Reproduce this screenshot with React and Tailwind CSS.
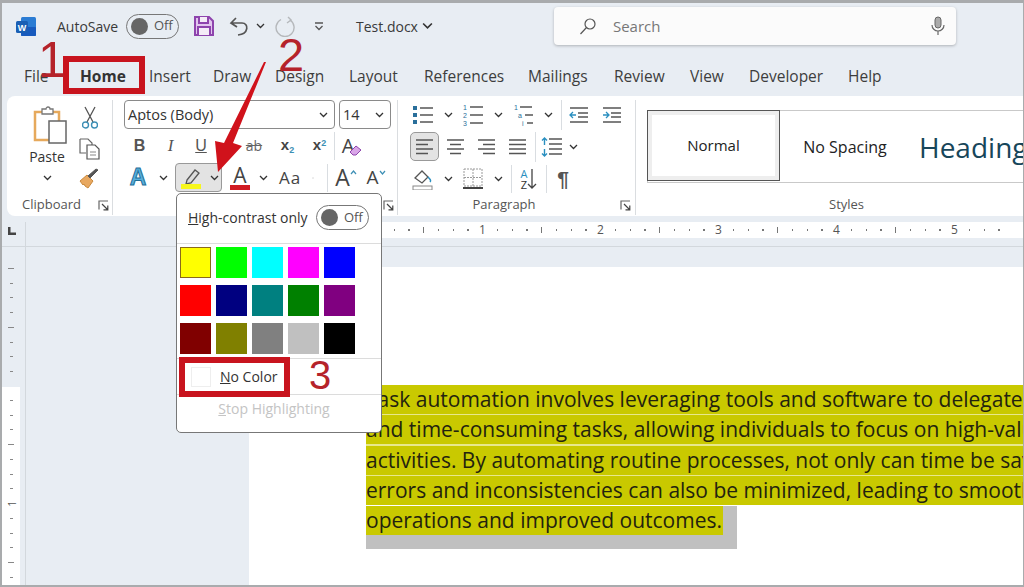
import React from "react";

const Chev = ({ c = "" }) => (
  <svg width="9" height="6" viewBox="0 0 9 6" className={c}><path d="M1 1l3.5 3.5L8 1" fill="none" stroke="#333" strokeWidth="1.3" /></svg>
);
const Launcher = () => (
  <svg width="11" height="11" viewBox="0 0 11 11"><path d="M1 9.5V1h9" fill="none" stroke="#666" strokeWidth="1.2" /><path d="M4 4l5.5 5.5M9.8 5.5v4.3H5.5" fill="none" stroke="#444" strokeWidth="1.2" /></svg>
);
const Sep = ({ h = "h-[30px]" }) => <div className={`w-px ${h} bg-[#d9dde1] shrink-0`} />;
const Cell = ({ w, children, c = "" }) => <div className={`${w} h-full flex items-center justify-center shrink-0 ${c}`}>{children}</div>;

const Lines = ({ kind = "list" }) => {
  const p = {
    left: "M2 3h17M2 7.5h12M2 12h17M2 16.5h12",
    center: "M2 3h17M5 7.5h11M2 12h17M5 16.5h11",
    right: "M2 3h17M7 7.5h12M2 12h17M7 16.5h12",
    just: "M2 3h17M2 7.5h17M2 12h17M2 16.5h17",
  }[kind];
  return <svg width="21" height="20" viewBox="0 0 21 20"><path d={p} stroke="#555" strokeWidth="1.5" fill="none" /></svg>;
};

const tabs = [
  ["File", "w-[56px]"],
  ["Home", "w-[69px]"],
  ["Insert", "w-[64px]"],
  ["Draw", "w-[62px]"],
  ["Design", "w-[74px]"],
  ["Layout", "w-[75px]"],
  ["References", "w-[104px]"],
  ["Mailings", "w-[86px]"],
  ["Review", "w-[76px]"],
  ["View", "w-[59px]"],
  ["Developer", "w-[99px]"],
  ["Help", "w-[50px]"],
];

const swatches = [
  ["bg-[#ffff00]", "bg-[#00ff00]", "bg-[#00ffff]", "bg-[#ff00ff]", "bg-[#0000ff]"],
  ["bg-[#ff0000]", "bg-[#000080]", "bg-[#008080]", "bg-[#008000]", "bg-[#800080]"],
  ["bg-[#800000]", "bg-[#808000]", "bg-[#808080]", "bg-[#c0c0c0]", "bg-[#000000]"],
];

const Toggle = () => (
  <div className="w-[53px] h-[25px] rounded-full border border-[#777] bg-white flex items-center pl-[4px] gap-[6px]">
    <div className="w-[17px] h-[17px] rounded-full bg-[#666]" />
    <span className="text-[13px] text-[#555]">Off</span>
  </div>
);

function HRuler() {
  const items = [];
  for (let i = 0; i < 44; i++) {
    const n = i % 8 === 0 && i > 0 ? i / 8 : null;
    items.push(
      <div key={i} className="w-[14.75px] h-full shrink-0 flex items-center justify-start relative">
        {n ? (
          <span className="-ml-[3px] text-[12px] leading-none text-[#555]">{n}</span>
        ) : i % 4 === 0 ? (
          <div className="w-px h-[6px] bg-[#777]" />
        ) : (
          <div className="w-[1.5px] h-[1.5px] bg-[#777]" />
        )}
      </div>
    );
  }
  return <div className="flex h-full">{items}</div>;
}

function VRuler({ start, count }) {
  const items = [];
  for (let i = 0; i < count; i++) {
    const k = start + i;
    items.push(
      <div key={i} className="h-[14.75px] w-full shrink-0 flex items-center justify-center">
        {k === 8 ? (
          <span className="text-[11px] leading-none text-[#555] -rotate-90">1</span>
        ) : k % 4 === 0 ? (
          <div className="w-[6px] h-px bg-[#888]" />
        ) : (
          <div className="w-[3px] h-px bg-[#888]" />
        )}
      </div>
    );
  }
  return <div className="flex flex-col">{items}</div>;
}

const docLines = [
  "Task automation involves leveraging tools and software to delegate repetitive",
  "and time-consuming tasks, allowing individuals to focus on high-value",
  "activities. By automating routine processes, not only can time be saved, but",
  "errors and inconsistencies can also be minimized, leading to smoother",
];

export default function App() {
  return (
    <div className="relative w-[1024px] h-[587px] overflow-hidden bg-[#e8edf3] border-t-[3px] border-l-[2px] border-r-[1px] border-b-[2px] border-[#a9abad] font-['Open_Sans','Noto_Sans',sans-serif] text-[#333]">
      {/* title bar */}
      <div className="h-[46px] flex items-center">
        <div className="w-[14px] shrink-0" />
        <svg width="21" height="21" viewBox="0 0 21 21" className="shrink-0">
          <rect x="5" y="1" width="15" height="19" rx="1.5" fill="#2b7cd3" />
          <rect x="5" y="11" width="15" height="9" rx="1" fill="#185abd" />
          <rect x="0" y="5" width="12" height="12" rx="1.5" fill="#1a5fb4" />
          <text x="6" y="14.5" textAnchor="middle" fontSize="9" fontWeight="700" fill="#fff" fontFamily="Liberation Sans">W</text>
        </svg>
        <span className="ml-[20px] text-[14px] text-[#3a3a3a] w-[66px]">AutoSave</span>
        <div className="ml-[3px] w-[53px] h-[25px] rounded-full border border-[#777] flex items-center pl-[4px] gap-[6px]">
          <div className="w-[17px] h-[17px] rounded-full bg-[#666]" />
          <span className="text-[13px] text-[#555]">Off</span>
        </div>
        <svg width="22" height="22" viewBox="0 0 22 22" className="ml-[14px]">
          <path d="M2 2h14l4 4v14H2z" fill="#e2c6ee" stroke="#8e44ad" strokeWidth="2" />
          <path d="M6 2v6h9V2M5 20v-8h12v8" fill="#f4ecf7" stroke="#8e44ad" strokeWidth="2" />
        </svg>
        <svg width="22" height="20" viewBox="0 0 22 20" className="ml-[14px]">
          <path d="M7 2L2 7l6 4M2.5 7H13c7 0 7 11-4 12" fill="none" stroke="#555" strokeWidth="1.7" />
        </svg>
        <Chev c="ml-[5px]" />
        <svg width="22" height="22" viewBox="0 0 22 22" className="ml-[10px]">
          <path d="M13 2l3 3-4 3M6 4.5a9 9 0 1 0 9 .5" fill="none" stroke="#b5b8bb" strokeWidth="1.4" />
        </svg>
        <svg width="10" height="9" viewBox="0 0 10 9" className="ml-[17px]"><path d="M1 1h8M1.5 4l3.5 3.5L8.5 4" fill="none" stroke="#555" strokeWidth="1.3" /></svg>
        <span className="ml-[32px] text-[14px] text-[#3a3a3a]">Test.docx</span>
        <Chev c="ml-[5px] scale-125" />
        <div className="ml-[122px] w-[402px] h-[38px] bg-[#fbfbfb] rounded-[4px] shadow-[0_1px_3px_rgba(0,0,0,0.25)] flex items-center pl-[25px] pr-[10px]">
          <svg width="18" height="18" viewBox="0 0 18 18"><circle cx="11" cy="7" r="5" fill="none" stroke="#555" strokeWidth="1.2" /><path d="M7.5 10.5L1.5 17" stroke="#555" strokeWidth="1.2" /></svg>
          <span className="ml-[16px] text-[15px] text-[#777]">Search</span>
          <svg width="16" height="20" viewBox="0 0 16 20" className="ml-auto"><rect x="5" y="1" width="6" height="11" rx="3" fill="#aaa" stroke="#666" /><path d="M2 9a6 6 0 0 0 12 0M8 15v4" fill="none" stroke="#666" strokeWidth="1.2" /></svg>
        </div>
      </div>

      {/* tabs */}
      <div className="h-[47px] flex items-center pt-[8px] pl-[22px] text-[15.5px] text-[#3d3d3d]">
        {tabs.map(([t, w]) => (
          <span key={t} className={`${w} shrink-0 ${t === "Home" ? "font-bold text-[#333]" : ""}`}>{t}</span>
        ))}
      </div>

      {/* ribbon */}
      <div className="ml-[5px] h-[120px] bg-white rounded-l-[8px] flex pt-[4px] text-[#333]">
        {/* clipboard */}
        <div className="w-[106px] shrink-0 border-r border-[#dadde0] flex flex-col mb-[1px]">
          <div className="flex-1 flex">
            <div className="w-[72px] flex flex-col items-center pl-[8px] pt-[6px]">
              <svg width="36" height="38" viewBox="0 0 36 38" className="ml-[5px]">
                <path d="M3 6h24v28H3z" fill="#fff" stroke="#e6a95c" strokeWidth="2.5" />
                <path d="M10 6V3h4a2 2 0 0 1 4 0h3v5H10z" fill="#fff" stroke="#777" strokeWidth="1.3" />
                <rect x="17" y="15" width="17" height="22" fill="#fff" stroke="#666" strokeWidth="1.5" />
              </svg>
              <span className="text-[14px] mt-[2px]">Paste</span>
              <Chev c="mt-[8px]" />
            </div>
            <div className="flex flex-col items-center pt-[6px] gap-[8px]">
              <svg width="16" height="24" viewBox="0 0 16 24"><path d="M3 1l8 15M13 1L5 16" stroke="#555" strokeWidth="1.3" /><circle cx="3.5" cy="19" r="3" fill="none" stroke="#3d8fb5" strokeWidth="1.4" /><circle cx="12.5" cy="19" r="3" fill="none" stroke="#3d8fb5" strokeWidth="1.4" /></svg>
              <svg width="21" height="22" viewBox="0 0 21 22"><path d="M1 1h8l4 4v2M1 1v14h6" fill="#fff" stroke="#666" strokeWidth="1.2" /><path d="M8 7h8l4 4v10H8z" fill="#fff" stroke="#555" strokeWidth="1.2" /><path d="M11 14h6M11 17h6" stroke="#888" /></svg>
              <svg width="21" height="21" viewBox="0 0 21 21"><path d="M1 13l7-6 6 6-5 7-3-2-1-2-1 1z" fill="#e8a860" stroke="#c98a3e" /><path d="M9 8l2 2 8-8-2-1z" fill="#555" stroke="#555" /></svg>
            </div>
          </div>
          <div className="h-[20px] flex items-center pl-[15px] pr-[3px] justify-between">
            <span className="text-[13px] text-[#555]">Clipboard</span>
            <Launcher />
          </div>
        </div>

        {/* font */}
        <div className="w-[285px] shrink-0 border-r border-[#dadde0] flex flex-col pl-[11px] mb-[1px]">
          <div className="flex gap-[4px] h-[29px]">
            <div className="w-[211px] h-[29px] border border-[#8a8a8a] rounded-[4px] flex items-center justify-between pl-[3px] pr-[6px] text-[14.5px]">
              <span>Aptos (Body)</span><Chev />
            </div>
            <div className="w-[52px] h-[29px] border border-[#8a8a8a] rounded-[4px] flex items-center justify-between pl-[3px] pr-[6px] text-[14.5px]">
              <span>14</span><Chev />
            </div>
          </div>
          <div className="flex items-center h-[33px] text-[15px]">
            <Cell w="w-[31px]"><b className="font-['Liberation_Sans'] text-[16px] text-[#555]">B</b></Cell>
            <Cell w="w-[31px]"><i className="font-['Liberation_Serif'] text-[17px] text-[#555]">I</i></Cell>
            <Cell w="w-[30px]"><u className="font-['Liberation_Sans'] text-[16px] text-[#555]">U</u></Cell>
            <Cell w="w-[22px]"><Chev /></Cell>
            <Cell w="w-[32px]"><s className="text-[14px] text-[#666]">ab</s></Cell>
            <Cell w="w-[35px]"><b className="font-['Liberation_Sans'] text-[15px] text-[#444]">x<sub className="text-[#3d8fb5] text-[9px]">2</sub></b></Cell>
            <Cell w="w-[29px]"><b className="font-['Liberation_Sans'] text-[15px] text-[#444]">x<sup className="text-[#3d8fb5] text-[9px]">2</sup></b></Cell>
            <Sep h="h-[28px]" />
            <Cell w="w-[34px]" c="relative">
              <span className="text-[20px] text-[#444]">A</span>
              <svg width="13" height="11" viewBox="0 0 13 11" className="-ml-[5px] mt-[9px]"><path d="M1 7l6-6 5 4-5 5H4z" fill="#d9a6e8" stroke="#8e44ad" /></svg>
            </Cell>
          </div>
          <div className="flex items-center h-[29px] mt-[1px]">
            <Cell w="w-[28px]">
              <span className="text-[23px] font-bold leading-none text-[#5ab0dc] [-webkit-text-stroke:1px_#1f6f99] font-['Liberation_Sans']">A</span>
            </Cell>
            <Cell w="w-[23px]"><Chev /></Cell>
            <div className="w-[47px] h-[29px] bg-[#e3e3e3] border border-[#999] rounded-[4px] flex items-center pl-[4px] gap-[8px] shrink-0">
              <svg width="22" height="22" viewBox="0 0 22 22">
                <path d="M7 13L15 3l4 3-8 10-5 1z" fill="#dcdcdc" stroke="#555" strokeWidth="1.3" />
                <rect x="1" y="17" width="20" height="5" fill="#f7f71c" />
              </svg>
              <Chev />
            </div>
            <Cell w="w-[36px]">
              <div className="flex flex-col items-center w-[20px]">
                <span className="text-[21px] leading-[20px] text-[#444]">A</span>
                <div className="w-[20px] h-[5px] bg-[#d01c24]" />
              </div>
            </Cell>
            <Cell w="w-[10px]"><Chev /></Cell>
            <Cell w="w-[44px]"><span className="text-[17px] tracking-wider text-[#444]">Aa</span></Cell>
            <Cell w="w-[2px]"><Chev /></Cell>
            <div className="w-[13px]" />
            <Sep h="h-[28px]" />
            <Cell w="w-[36px]"><span className="text-[23px] text-[#444]">A</span><svg width="7" height="5" viewBox="0 0 7 5" className="mb-[10px]"><path d="M1 4l2.5-3L6 4" fill="none" stroke="#3d8fb5" strokeWidth="1.2" /></svg></Cell>
            <Cell w="w-[24px]"><span className="text-[19px] text-[#444]">A</span><svg width="7" height="5" viewBox="0 0 7 5" className="mb-[10px]"><path d="M1 1l2.5 3L6 1" fill="none" stroke="#3d8fb5" strokeWidth="1.2" /></svg></Cell>
          </div>
          <div className="flex-1" />
          <div className="h-[20px] flex items-center justify-end pr-[3px] gap-[70px]">
            <span className="text-[13px] text-[#555]">Font</span>
            <Launcher />
          </div>
        </div>

        {/* paragraph */}
        <div className="w-[238px] shrink-0 border-r border-[#dadde0] flex flex-col pl-[10px] mb-[1px]">
          <div className="flex items-center h-[29px]">
            <Cell w="w-[28px]" c="ml-[1px]">
              <svg width="22" height="22" viewBox="0 0 22 22"><path d="M8 4h13M8 11h13M8 18h13" stroke="#555" strokeWidth="1.5" /><path d="M1 2h4v4H1zM1 9h4v4H1zM1 16h4v4H1z" fill="#2a6f9b" /></svg>
            </Cell>
            <Cell w="w-[22px]"><Chev /></Cell>
            <Cell w="w-[28px]">
              <svg width="22" height="24" viewBox="0 0 22 24"><path d="M8 4h13M8 12h13M8 20h13" stroke="#555" strokeWidth="1.5" /><text x="1" y="7" fontSize="7" fill="#2a6f9b" fontFamily="Liberation Sans">1</text><text x="1" y="15" fontSize="7" fill="#2a6f9b" fontFamily="Liberation Sans">2</text><text x="1" y="23" fontSize="7" fill="#2a6f9b" fontFamily="Liberation Sans">3</text></svg>
            </Cell>
            <Cell w="w-[22px]"><Chev /></Cell>
            <Cell w="w-[30px]">
              <svg width="22" height="24" viewBox="0 0 22 24"><path d="M7 4h12M12 12h8M14 20h6" stroke="#555" strokeWidth="1.5" /><text x="1" y="7" fontSize="7" fill="#2a6f9b" fontFamily="Liberation Sans">1</text><text x="5" y="15" fontSize="7" fill="#2a6f9b" fontFamily="Liberation Sans">a</text><text x="9" y="23" fontSize="7" fill="#2a6f9b" fontFamily="Liberation Sans">i</text></svg>
            </Cell>
            <Cell w="w-[18px]"><Chev /></Cell>
            <div className="w-[4px]" />
            <Sep h="h-[30px]" />
            <Cell w="w-[34px]">
              <svg width="20" height="18" viewBox="0 0 20 18"><path d="M1 2h18M9 7h10M9 11h10M1 16h18" stroke="#555" strokeWidth="1.5" /><path d="M7 9H1M4 6L1 9l3 3" fill="none" stroke="#2a8fc0" strokeWidth="1.3" /></svg>
            </Cell>
            <Cell w="w-[31px]">
              <svg width="20" height="18" viewBox="0 0 20 18"><path d="M1 2h18M9 7h10M9 11h10M1 16h18" stroke="#555" strokeWidth="1.5" /><path d="M1 9h6M4 6l3 3-3 3" fill="none" stroke="#2a8fc0" strokeWidth="1.3" /></svg>
            </Cell>
          </div>
          <div className="flex items-center h-[33px] mt-[1px]">
            <div className="w-[29px] h-[29px] ml-[2px] bg-[#e3e3e3] border border-[#999] rounded-[5px] flex items-center justify-center shrink-0"><Lines kind="left" /></div>
            <Cell w="w-[32px]"><Lines kind="center" /></Cell>
            <Cell w="w-[31px]"><Lines kind="right" /></Cell>
            <Cell w="w-[31px]"><Lines kind="just" /></Cell>
            <div className="w-[2px]" />
            <Sep h="h-[30px]" />
            <Cell w="w-[31px]">
              <svg width="22" height="22" viewBox="0 0 22 22"><path d="M8 3h13M8 8h13M8 13h13M8 18h13" stroke="#555" strokeWidth="1.5" /><path d="M3.5 2v7M1 4.5L3.5 2 6 4.5M3.5 13v7M1 17.5L3.5 20 6 17.5" fill="none" stroke="#2a8fc0" strokeWidth="1.4" /></svg>
            </Cell>
            <Cell w="w-[12px]"><Chev /></Cell>
          </div>
          <div className="flex items-center h-[31px]">
            <Cell w="w-[28px]" c="ml-[1px]">
              <svg width="22" height="22" viewBox="0 0 22 22"><path d="M3 10l7-7 6 6-6 6z" fill="#fff" stroke="#555" strokeWidth="1.3" /><path d="M16 9c3 3 3 4 2 5" stroke="#2a8fc0" strokeWidth="1.5" fill="none" /><rect x="1" y="18" width="19" height="4" fill="#fff" stroke="#888" /></svg>
            </Cell>
            <Cell w="w-[22px]"><Chev /></Cell>
            <Cell w="w-[28px]">
              <svg width="20" height="22" viewBox="0 0 20 22"><path d="M1 1h18v17H1zM10 1v17M1 9.5h18" fill="none" stroke="#999" strokeDasharray="2 1" /><path d="M0 20h20" stroke="#444" strokeWidth="2" /></svg>
            </Cell>
            <Cell w="w-[22px]"><Chev /></Cell>
            <div className="w-[2px]" />
            <Sep h="h-[28px]" />
            <Cell w="w-[34px]">
              <span className="flex flex-col items-center text-[11px] leading-[11px]"><span className="text-[#2a8fc0]">A</span><span>Z</span></span>
              <svg width="10" height="22" viewBox="0 0 10 22"><path d="M5 1v19M1 16l4 4 4-4" fill="none" stroke="#444" strokeWidth="1.3" /></svg>
            </Cell>
            <Sep h="h-[28px]" />
            <Cell w="w-[32px]"><span className="text-[21px] font-bold text-[#555] font-['Liberation_Sans']">¶</span></Cell>
          </div>
          <div className="flex-1" />
          <div className="h-[20px] flex items-center">
            <span className="w-[212px] text-center text-[13px] text-[#555] pr-[20px]">Paragraph</span>
            <Launcher />
          </div>
        </div>

        {/* styles */}
        <div className="flex-1 min-w-0 flex flex-col pl-[11px] overflow-hidden mb-[1px]">
          <div className="flex-1 pt-[10px]">
            <div className="w-[400px] h-[73px] border-t border-b border-l border-[#c9c9c9] flex">
              <div className="w-[133px] h-[71px] border border-[#555] shrink-0 -mt-[1px] -ml-[1px] p-[4px] bg-[#eeeeee]">
                <div className="w-full h-full bg-white flex items-center justify-center text-[15px] text-[#222]">Normal</div>
              </div>
              <div className="w-[130px] shrink-0 flex items-center justify-center text-[16px] text-[#222]">No Spacing</div>
              <div className="flex items-center pl-[9px] text-[28px] leading-none text-[#17465a] whitespace-nowrap">Heading 1</div>
            </div>
          </div>
          <div className="h-[20px] flex items-center justify-start pl-[182px]">
            <span className="text-[13px] text-[#555]">Styles</span>
          </div>
        </div>
      </div>

      {/* horizontal ruler row */}
      <div className="mt-[6px] h-[25px] flex border-b border-[#d3d8dd]">
        <div className="w-[24px] shrink-0 border-r border-[#d3d8dd] flex items-start pl-[5px] pt-[4px]">
          <svg width="10" height="10" viewBox="0 0 10 10"><path d="M1 1h2.5v5.5H9V9H1z" fill="#444" /></svg>
        </div>
        <div className="w-[223px] shrink-0" />
        <div className="flex-1 h-[16px] bg-white flex overflow-hidden">
          <div className="w-[115px] bg-[#f0f3f6] shrink-0" />
          <HRuler />
        </div>
      </div>

      {/* doc area */}
      <div className="flex h-[339px]">
        <div className="w-[18px] shrink-0 flex flex-col overflow-hidden">
          <div className="h-[140px] shrink-0 pt-[14px] overflow-hidden"><VRuler start={0} count={8} /></div>
          <div className="flex-1 bg-white pt-[6px] overflow-hidden"><VRuler start={1} count={14} /></div>
        </div>
        <div className="w-[6px] shrink-0 border-r border-[#d3d8dd]" />
        <div className="w-[223px] shrink-0" />
        <div className="flex-1 flex flex-col min-w-0">
          <div className="h-[20px] shrink-0" />
          <div className="flex-1 bg-white pl-[117px] pt-[118px] overflow-hidden">
            <div className="w-[800px] text-[21px] text-[#23230f] font-['Open_Sans',sans-serif]">
              <div className="bg-[#e8e88c]">
                {docLines.map((l) => (
                  <div key={l} className="h-[29px] mb-[1.3px] leading-[29px] bg-[#c9c900] whitespace-nowrap">{l}</div>
                ))}
              </div>
              <div className="w-[371px] bg-[#c0c0c0] pb-[14px]">
                <div className="w-[357px] h-[29px] leading-[29px] bg-[#c9c900] whitespace-nowrap">operations and improved outcomes.</div>
              </div>
            </div>
          </div>
        </div>
      </div>

      {/* highlight popup */}
      <div className="absolute left-[174px] top-[190px] w-[206px] h-[240px] bg-white border border-[#777] rounded-[5px] text-[#333]">
        <div className="h-[50px] flex items-center pl-[11px] pb-[2px] border-b border-[#dcdcdc]">
          <span className="text-[14px] w-[128px]"><u>H</u>igh-contrast only</span>
          <Toggle />
        </div>
        <div className="pl-[3px] pt-[3px] flex flex-col gap-[7px] h-[114px]">
          {swatches.map((row, i) => (
            <div key={i} className="flex gap-[5px]">
              {row.map((s, j) => (
                <div key={s} className={`w-[31px] h-[31px] ${s} ${i === 0 && j === 0 ? "border border-[#8a6a1a]" : ""}`} />
              ))}
            </div>
          ))}
        </div>
        <div className="h-[37px] flex items-center pl-[14px] border-t border-b border-[#dcdcdc]">
          <div className="w-[20px] h-[20px] bg-white border border-[#eee]" />
          <span className="ml-[9px] text-[14px]"><u>N</u>o Color</span>
        </div>
        <div className="text-center text-[14px] text-[#c4c4c4] pt-[3px] pr-[10px]"><u>S</u>top Highlighting</div>
      </div>

      {/* annotations */}
      <div className="absolute left-[61px] top-[53px] w-[82px] h-[38px] border-[6px] border-[#c8141e]" />
      <div className="absolute left-[177px] top-[354px] w-[111px] h-[40px] border-[6px] border-[#c8141e]" />
      <span className="absolute left-[36px] top-[27px] text-[50px] leading-[60px] text-[#b5232a] font-['Liberation_Sans']">1</span>
      <span className="absolute left-[276px] top-[27px] text-[47px] leading-[50px] text-[#b5232a] font-['Liberation_Sans']">2</span>
      <span className="absolute left-[307px] top-[347px] text-[40px] leading-[50px] text-[#b5232a] font-['Liberation_Sans']">3</span>
      <svg className="absolute left-0 top-0 pointer-events-none" width="1024" height="587" viewBox="0 0 1024 587">
        <path d="M262 59L264 59L231 140L240 143L216 169L213 138L222 140Z" fill="#d0121b" />
      </svg>
    </div>
  );
}
